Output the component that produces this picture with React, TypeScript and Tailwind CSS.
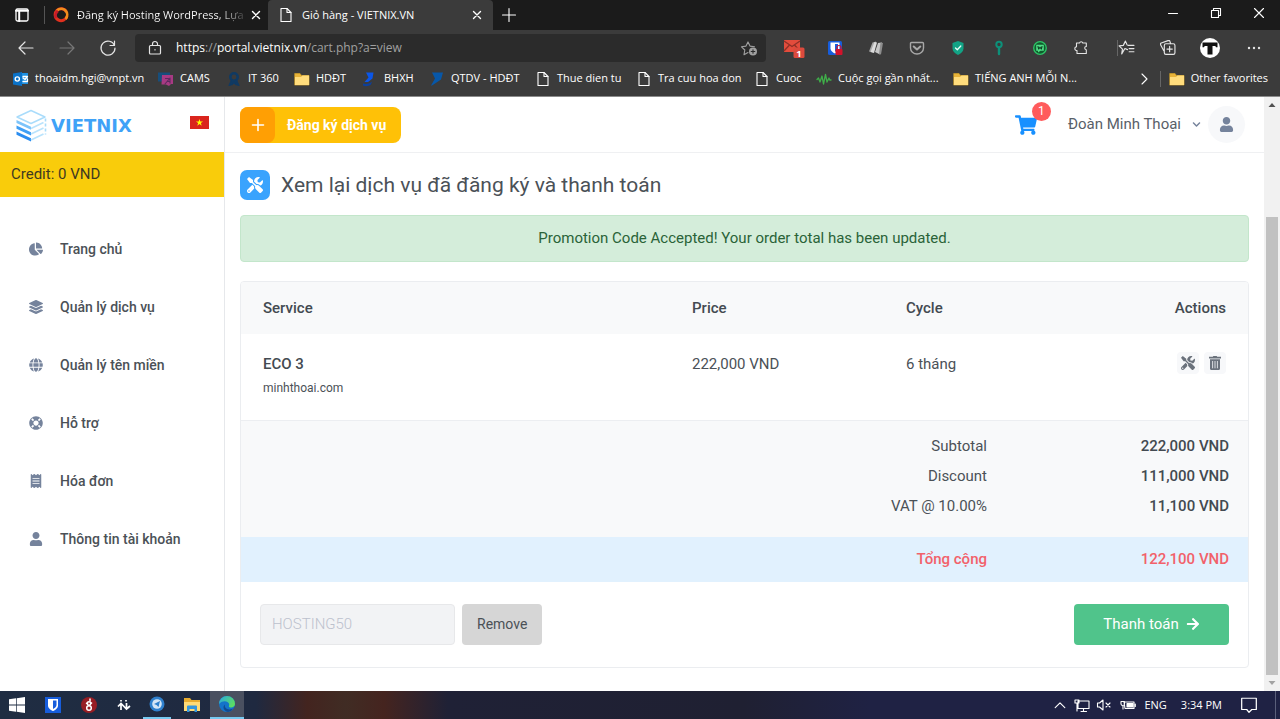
import type { ReactNode } from "react";
import {
  FaChartPie,
  FaLayerGroup,
  FaGlobe,
  FaLifeRing,
  FaReceipt,
  FaUser,
  FaTools,
  FaShoppingCart,
  FaTrashAlt,
  FaArrowRight,
  FaChevronDown,
} from "react-icons/fa";

type SvgProps = { children: ReactNode; className?: string; box?: string };

function Line({ children, className = "size-4", box = "0 0 16 16" }: SvgProps) {
  return (
    <svg
      viewBox={box}
      className={`shrink-0 ${className}`}
      fill="none"
      stroke="currentColor"
      strokeWidth="1.1"
      strokeLinecap="round"
      strokeLinejoin="round"
      aria-hidden="true"
    >
      {children}
    </svg>
  );
}

const PageIcon = () => (
  <Line>
    <path d="M3 1.5h6l4 4v9H3z" strokeWidth="1.1" />
    <path d="M9 1.5v4h4" strokeWidth="1.1" />
  </Line>
);

const FolderIcon = () => (
  <Line>
    <path d="M1 2.5h5l1.5 2H15V14H1z" fill="#e8b339" stroke="#c79a2b" strokeWidth="0.8" />
    <path d="M1 6h6l1.5-1.5H15V14H1z" fill="#ffdc7c" stroke="none" />
  </Line>
);

const OutlookIcon = () => (
  <Line>
    <path d="M6 2h9v11H6z" fill="#1e90e0" stroke="none" />
    <path d="M0 2.500 9 1v14l-9-1.500z" fill="#0a72c8" stroke="none" />
    <circle cx="4.300" cy="8" r="2.100" stroke="#fff" strokeWidth="1.400" />
    <path d="M10 5.500h4.500l-2.500 3-2-1.500M10 10.500h4.500V8" stroke="#fff" strokeWidth="1.300" />
  </Line>
);

const CamsIcon = () => (
  <Line>
    <path d="M0 1.500h12v9H0z" fill="#174e7c" stroke="none" />
    <path d="M4 4h11v9h-2l-2 2-3-1.500H3.500z" fill="#a83a83" stroke="none" />
    <path d="m7 13 5-6v5M7.500 7.500h3M9 10.500h3" stroke="#5b2a5e" strokeWidth="1.100" />
  </Line>
);

const ItIcon = () => (
  <Line>
    <circle cx="8" cy="6" r="3.700" stroke="#103a63" strokeWidth="2.600" />
    <path d="M5.500 9 3 14.500l3.500-1L8 11l1.500 2.500 3.500 1L10.500 9" fill="#103a63" stroke="#103a63" />
  </Line>
);

const BhxhIcon = () => (
  <Line>
    <path d="M4 1.500h7.500l-1 6-4.500 3.500H2.500l4-4.500z" fill="#0b56e8" stroke="none" />
    <path d="M1 12.500c4 1 7 0 9-2l-1 3c-2 2-6 2-8 1z" fill="#0d3f9a" stroke="none" />
  </Line>
);

const QtdvIcon = () => (
  <Line>
    <path d="M3 1.500h11l-2 7-9 6H2l4-7z" fill="#0757a8" stroke="none" />
  </Line>
);

const WaveIcon = () => (
  <Line>
    <path d="M1 8.500 2.500 7l1.500 4L6 5l1.500 8L9.500 3.500 11 11l2-4 .7 2H15" stroke="#3fae49" strokeWidth="1.300" />
  </Line>
);

const favorites: { label: string; icon: ReactNode; width: string }[] = [
  { label: "thoaidm.hgi@vnpt.vn", icon: <OutlookIcon />, width: "w-[145px]" },
  { label: "CAMS", icon: <CamsIcon />, width: "w-[68px]" },
  { label: "IT 360", icon: <ItIcon />, width: "w-[68px]" },
  { label: "HDĐT", icon: <FolderIcon />, width: "w-[68px]" },
  { label: "BHXH", icon: <BhxhIcon />, width: "w-[67px]" },
  { label: "QTDV - HDĐT", icon: <QtdvIcon />, width: "w-[106px]" },
  { label: "Thue dien tu", icon: <PageIcon />, width: "w-[101px]" },
  { label: "Tra cuu hoa don", icon: <PageIcon />, width: "w-[118px]" },
  { label: "Cuoc", icon: <PageIcon />, width: "w-[62px]" },
  { label: "Cuộc gọi gần nhất...", icon: <WaveIcon />, width: "w-[137px]" },
  { label: "TIẾNG ANH MỖI N...", icon: <FolderIcon />, width: "w-[140px]" },
];

function TabStrip() {
  return (
    <div className="flex h-[30px] bg-[#1b1b1b] text-xs text-white">
      <button aria-label="Tab actions" className="flex w-11 items-center justify-center">
        <Line>
          <rect x="2" y="2" width="12" height="12" rx="1.500" strokeWidth="1.300" />
          <path d="M2 3.700h12M5.200 5v9" strokeWidth="2" />
        </Line>
      </button>
      <div className="my-1.5 w-px bg-[#555]" />
      <div className="flex w-[223px] items-center gap-2 pr-1 pl-2">
        <svg viewBox="0 0 16 16" className="size-4 shrink-0" aria-hidden="true">
          <path d="M13.500 5A6 6 0 1 0 14 9" fill="none" stroke="#e0301e" strokeWidth="3" />
          <path d="M4 3.500a6 6 0 0 1 8.500 8.500" fill="none" stroke="#f28c1c" strokeWidth="2.500" />
          <path d="M3 11a6 6 0 0 1 2-7" fill="none" stroke="#c21c2c" strokeWidth="2.500" />
        </svg>
        <span className="bg-linear-to-r from-white from-85% to-[#444] bg-clip-text text-[11px] whitespace-nowrap text-transparent">
          Đăng ký Hosting WordPress, Lựa
        </span>
        <button aria-label="Close tab" className="-ml-2 flex flex-1 justify-end">
          <Line>
            <path d="m4.500 4.500 7 7m0-7-7 7" strokeWidth="1.400" />
          </Line>
        </button>
      </div>
      <div className="flex w-[225px] items-center gap-2 rounded-t bg-[#3b3b3b] pr-2 pl-2.5">
        <PageIcon />
        <span className="text-[11px] whitespace-nowrap">Giỏ hàng - VIETNIX.VN</span>
        <button aria-label="Close tab" className="ml-auto">
          <Line>
            <path d="m4.500 4.500 7 7m0-7-7 7" strokeWidth="1.400" />
          </Line>
        </button>
      </div>
      <button aria-label="New tab" className="flex w-8 items-center justify-center">
        <Line>
          <path d="M8 1.500v13M1.500 8h13" />
        </Line>
      </button>
      <div className="ml-auto flex">
        <button aria-label="Minimize" className="flex w-[43px] items-center justify-center pb-1">
          <Line>
            <path d="M3.500 8.500h9" />
          </Line>
        </button>
        <button aria-label="Restore" className="flex w-[43px] items-center justify-center pb-1">
          <Line>
            <path d="M3.500 5.500h7v7h-7zM5.500 5.500v-2h7v7h-2" />
          </Line>
        </button>
        <button aria-label="Close" className="flex w-[43px] items-center justify-center pb-1">
          <Line>
            <path d="m3.500 3.500 9 9m0-9-9 9" />
          </Line>
        </button>
      </div>
    </div>
  );
}

function ExtButton({ label, children }: { label: string; children: ReactNode }) {
  return (
    <button aria-label={label} className="flex w-[41px] items-center justify-center">
      {children}
    </button>
  );
}

function Toolbar() {
  return (
    <div className="flex h-[35px] items-center bg-[#3b3b3b] text-[#e4e4e4]">
      <div className="flex w-[135px] items-center pl-[17px]">
        <button aria-label="Back" className="w-[41px]">
          <Line className="size-[18px]" box="0 0 18 18">
            <path d="M16 9H2m6-6L2 9l6 6" strokeWidth="1.200" />
          </Line>
        </button>
        <button aria-label="Forward" className="w-[41px] text-[#777]">
          <Line className="size-[18px]" box="0 0 18 18">
            <path d="M2 9h14m-6-6 6 6-6 6" strokeWidth="1.200" />
          </Line>
        </button>
        <button aria-label="Refresh">
          <Line className="size-[18px]" box="0 0 18 18">
            <path d="M15.500 6.500A7 7 0 1 0 16 9M15.500 2v4.500H11" strokeWidth="1.200" />
          </Line>
        </button>
      </div>
      <div className="flex h-[28px] flex-1 items-center rounded bg-[#2b2b2b] pr-2 pl-3">
        <Line>
          <rect x="2.500" y="5.500" width="11" height="8.500" rx="1" strokeWidth="1.200" />
          <path d="M5.500 5.500V4a2.500 2.500 0 0 1 5 0v1.500M8 9.500v.5" strokeWidth="1.200" />
        </Line>
        <div
          role="textbox"
          aria-label="Address"
          contentEditable
          suppressContentEditableWarning
          className="ml-[13px] flex-1 text-xs whitespace-nowrap text-[#a0a0a0] outline-none"
        >
          <span className="text-white">https</span>://<span className="text-white">portal.vietnix.vn</span>
          /cart.php?a=view
        </div>
        <button aria-label="Add to favorites" className="text-[#a0a0a0]">
          <Line className="size-[18px]" box="0 0 18 18">
            <path d="M8 13.500 4 15.700l.8-4.700-3.300-3.200 4.500-.7 2-4.200 2 4.200 4.500.7" />
            <circle cx="13" cy="12.500" r="4" fill="currentColor" stroke="none" />
            <path d="M13 10.700v3.600m-1.800-1.800h3.600" stroke="#2b2b2b" />
          </Line>
        </button>
      </div>
      <div className="flex pl-[7px]">
        <ExtButton label="Mail">
          <svg viewBox="0 0 22 20" className="h-5 w-[22px]" aria-hidden="true">
            <path d="M1 2h16v12H1z" fill="#e34c3c" />
            <path d="m1 3 8 5.500L17 3M1 13l5.500-6M17 13l-5.500-6" stroke="#8f3027" strokeWidth="1.300" fill="none" />
            <rect x="10.500" y="9.500" width="11" height="10.500" rx="1.500" fill="#dc4a3d" />
            <text x="16" y="18.500" textAnchor="middle" fontSize="9.500" fontWeight="700" fill="#fff">
              1
            </text>
          </svg>
        </ExtButton>
        <ExtButton label="Password manager">
          <svg viewBox="0 0 16 16" className="size-4" aria-hidden="true">
            <rect x="1" y="1" width="14" height="14" rx="1.500" fill="#175ddc" />
            <path d="M3.500 2.500h9v6c0 2.500-2.500 4-4.500 5-2-1-4.500-2.500-4.500-5z" fill="#fff" />
            <path d="M8 4h3v5l-3 3z" fill="#175ddc" />
            <rect x="8.500" y="9" width="7" height="6" rx="1" fill="#d3122b" />
            <path d="M10 9V7.500a2 2 0 0 1 4 0V9" stroke="#d3122b" strokeWidth="1.200" fill="none" />
          </svg>
        </ExtButton>
        <ExtButton label="Reader">
          <svg viewBox="0 0 16 16" className="size-4" aria-hidden="true">
            <path d="M4.500 2.500 8 1.500 5.500 12.500l-4.500-1z" fill="#a5a5a5" />
            <path d="m6.500 2 2.500.5-3 10.500-3.500-1z" fill="#dcdcdc" />
            <path d="m10 3 4-.5-2 12-5-2.500z" fill="#c7c7c7" />
            <path d="M12.500 2.500 15 3l-2 11.500-2-.5z" fill="#8d8d8d" />
          </svg>
        </ExtButton>
        <ExtButton label="Pocket">
          <Line>
            <path d="M1.500 3.500q0-1 1-1h11q1 0 1 1V8a6.500 6 0 0 1-13 0z" stroke="#a8a8a8" strokeWidth="1.400" />
            <path d="m4.700 6.500 3.300 3 3.300-3" stroke="#a8a8a8" strokeWidth="2" />
          </Line>
        </ExtButton>
        <ExtButton label="Protection">
          <Line>
            <path d="m8 1 5.500 2v5.500c0 3-2.500 5-5.500 6.500-3-1.500-5.500-3.500-5.500-6.500V3z" fill="#12a385" stroke="none" />
            <path d="m5.500 8 1.800 1.800L10.800 6" stroke="#e8fff8" strokeWidth="1.300" />
          </Line>
        </ExtButton>
        <ExtButton label="Key">
          <Line>
            <circle cx="8" cy="4.500" r="2.700" stroke="#0d9079" strokeWidth="2" />
            <path d="M8 7.500v6.500" stroke="#0d9079" strokeWidth="2.400" />
          </Line>
        </ExtButton>
        <ExtButton label="Assistant">
          <Line>
            <circle cx="8" cy="8" r="6.300" fill="#0f5c2d" stroke="#2dc567" strokeWidth="1.300" />
            <path d="M4.200 4.700h7.600v6H8.500L6 12.500v-1.800H4.200z" fill="#4fdc85" stroke="none" />
            <path d="m6 6.500.7 2.500L8 7.200 9.300 9l.7-2.500" stroke="#0b3d1f" />
          </Line>
        </ExtButton>
        <ExtButton label="Extensions">
          <Line>
            <path d="M3.500 3h3a1.700 1.700 0 0 1 3.300 0h3.500v3.500a1.600 1.600 0 1 0 0 3.200V13.500H4v-3a1.900 1.900 0 1 1-.5-3.800z" />
          </Line>
        </ExtButton>
      </div>
      <div className="flex items-center pr-[18px] pl-4">
        <div className="h-4 w-px bg-[#666]" />
        <button aria-label="Favorites">
          <Line className="size-[17px]">
            <path d="m9 10-2.500-1L3.500 14l.7-4.500L1 6.500 5 6l2-4 1.500 3.500M9.500 6H15m-4.500 3H15m-4.500 3H15" />
          </Line>
        </button>
        <button aria-label="Collections" className="ml-6">
          <Line className="size-[17px]">
            <path d="M4.500 11 1.500 5.500V4l7-2.500H10l1 3M5 12V6q0-1.500 1.500-1.500h7Q15 4.500 15 6v7q0 1.500-1.500 1.500h-7Q5 14.500 5 13zM10 7v5M7.500 9.500h5" />
          </Line>
        </button>
        <button aria-label="Profile" className="ml-6">
          <svg viewBox="0 0 20 20" className="size-5" aria-hidden="true">
            <circle cx="10" cy="10" r="10" fill="#fff" />
            <path d="M2.500 4.500h15v4.700h-1.500L15.300 8h-2.800v8.500h-5V8H4.700L4 9.200H2.500z" fill="#111" />
          </svg>
        </button>
        <button aria-label="Settings" className="ml-[26px]">
          <svg viewBox="0 0 16 16" className="size-4" fill="#e4e4e4" aria-hidden="true">
            <circle cx="3" cy="8" r="1.200" />
            <circle cx="8" cy="8" r="1.200" />
            <circle cx="13" cy="8" r="1.200" />
          </svg>
        </button>
      </div>
    </div>
  );
}

function FavoritesBar() {
  return (
    <nav
      aria-label="Favorites"
      className="flex h-8 items-center border-b border-[#8b8b8b] bg-[#3b3b3b] pb-1 pl-[13px] text-[11px] text-white"
    >
      {favorites.map((f) => (
        <a key={f.label} href="#" className={`flex shrink-0 items-center gap-1.5 whitespace-nowrap ${f.width}`}>
          {f.icon}
          {f.label}
        </a>
      ))}
      <div className="ml-auto flex items-center pr-3">
        <button aria-label="More favorites">
          <Line>
            <path d="m6 3 5 5-5 5" />
          </Line>
        </button>
        <div className="mx-2 h-4 w-px bg-[#666]" />
        <a href="#" className="flex items-center gap-1.5 whitespace-nowrap">
          <FolderIcon />
          Other favorites
        </a>
      </div>
    </nav>
  );
}

const menu = [
  { label: "Trang chủ", Icon: FaChartPie },
  { label: "Quản lý dịch vụ", Icon: FaLayerGroup },
  { label: "Quản lý tên miền", Icon: FaGlobe },
  { label: "Hỗ trợ", Icon: FaLifeRing },
  { label: "Hóa đơn", Icon: FaReceipt },
  { label: "Thông tin tài khoản", Icon: FaUser },
];

function Logo() {
  return (
    <a href="#" aria-label="Vietnix" className="flex items-center gap-1">
      <svg viewBox="0 0 32 34" className="h-[34px] w-8" fill="none" aria-hidden="true">
        <path d="M16 1.500 30 8 16 14.500 2 8z" stroke="#a9dcfb" strokeWidth="1.400" strokeLinejoin="round" />
        <path d="M1.500 11 16 17.800v3L1.500 14z" fill="#7cc4fa" />
        <path d="M1.500 16.500 16 23.300v3.200L1.500 19.700z" fill="#3f9ff5" />
        <path d="M1.500 22.500 16 29.300v3.200L1.500 25.700z" fill="#2b8df0" />
        <path d="m16 19.500 12.500-6M16 25 28.500 19M16 31l12.500-6" stroke="#b9e3fc" strokeWidth="1.700" />
        <path d="M30.500 9.500v16" stroke="#a9dcfb" strokeWidth="1.600" strokeDasharray="3 2" />
      </svg>
      <span className="font-['DejaVu_Sans',sans-serif] text-lg font-bold text-[#3fa2f7]">VIETNIX</span>
    </a>
  );
}

function Sidebar() {
  return (
    <aside className="w-[225px] shrink-0 border-r border-[#e6e8eb]">
      <div className="flex h-[55px] items-center justify-between px-[15px] pt-0.5">
        <Logo />
        <svg viewBox="0 0 19 13" className="mb-1.5 h-[13px] w-[19px]" role="img" aria-label="Tiếng Việt">
          <path d="M0 0h19v13H0z" fill="#da251d" />
          <path
            d="m9.500 3 .85 2.500h2.700l-2.200 1.600.85 2.600-2.200-1.600-2.200 1.600.85-2.600L5.950 5.500h2.700z"
            fill="#ff0"
          />
        </svg>
      </div>
      <div className="flex h-[45px] items-center bg-[#f9cc0b] px-[11px] text-[15px] text-[#3f3a21]">Credit: 0 VND</div>
      <nav className="pt-[23px]">
        {menu.map(({ label, Icon }) => (
          <a
            key={label}
            href="#"
            className="flex h-[58px] items-center gap-4 pl-7 text-sm font-medium text-[#4b5157]"
          >
            <Icon className="size-4 shrink-0 p-px text-[#75839c]" />
            {label}
          </a>
        ))}
      </nav>
    </aside>
  );
}

function Header() {
  return (
    <header className="flex h-14 items-center justify-between border-b border-[#eff0f2] px-[15px]">
      <button className="flex h-9 items-center overflow-hidden rounded-lg bg-[#ffc107] text-sm font-bold text-white">
        <span className="flex h-full w-[35px] items-center justify-center rounded-r-lg bg-[#ff9f04]">
          <Line>
            <path d="M8 2.500v11M2.500 8h11" strokeWidth="1.600" />
          </Line>
        </span>
        <span className="pr-[15px] pl-3">Đăng ký dịch vụ</span>
      </button>
      <div className="flex items-center pr-1">
        <a href="#" aria-label="Giỏ hàng" className="relative mr-[31px]">
          <FaShoppingCart className="size-[22px] text-[#1890ff]" />
          <span className="absolute -top-[12px] left-[17px] flex size-[19px] items-center justify-center rounded-full bg-[#ff5b5c] text-xs text-white">
            1
          </span>
        </a>
        <button className="flex items-center text-[15px] text-[#596068]">
          Đoàn Minh Thoại
          <FaChevronDown className="ml-[11px] size-[9px] text-[#75839c]" />
          <span className="ml-[7px] flex size-[37px] items-center justify-center rounded-full bg-[#f7f8fa]">
            <FaUser className="size-[15px] text-[#75839c]" />
          </span>
        </button>
      </div>
    </header>
  );
}

const totals = [
  { label: "Subtotal", value: "222,000 VND" },
  { label: "Discount", value: "111,000 VND" },
  { label: "VAT @ 10.00%", value: "11,100 VND" },
];

function Cart() {
  return (
    <section className="overflow-hidden rounded border border-[#ebedf0] text-[15px]">
      <table className="w-full table-fixed text-left leading-6 text-[#4b5157]">
        <colgroup>
          <col />
          <col className="w-[214px]" />
          <col className="w-[214px]" />
          <col className="w-[150px]" />
        </colgroup>
        <thead className="bg-[#f8f9fa] text-[#434a51]">
          <tr className="h-[52px]">
            <th className="px-[22px] font-medium">Service</th>
            <th className="px-[22px] font-medium">Price</th>
            <th className="px-[22px] font-medium">Cycle</th>
            <th className="px-[22px] text-right font-medium">Actions</th>
          </tr>
        </thead>
        <tbody>
          <tr className="h-[86px] border-b border-[#eceef1] align-top">
            <td className="px-[22px] pt-[18px]">
              <div className="font-medium text-[#434a51]">ECO 3</div>
              <div className="text-xs leading-6">minhthoai.com</div>
            </td>
            <td className="px-[22px] pt-[18px]">222,000 VND</td>
            <td className="px-[22px] pt-[18px]">6 tháng</td>
            <td className="px-[22px] pt-[18px]">
              <div className="flex justify-end gap-[5px] text-[#6b727c]">
                <button aria-label="Edit" className="flex size-[22px] items-center justify-center rounded bg-[#f7f8fa]">
                  <FaTools className="size-3.5" />
                </button>
                <button
                  aria-label="Remove service"
                  className="flex size-[22px] items-center justify-center rounded bg-[#f7f8fa]"
                >
                  <svg viewBox="0 0 14 14" className="size-3.5" fill="currentColor" aria-hidden="true">
                    <path d="M1 .8h3.800L5.300 0h3.400l.5.800H13v1.800H1z" />
                    <path d="M2 3.300h10v9.200q0 1.500-1.500 1.500h-7Q2 14 2 12.500z" />
                    <path d="M4.600 5v7.300M7 5v7.300M9.400 5v7.300" stroke="#f7f8fa" strokeWidth="0.800" />
                  </svg>
                </button>
              </div>
            </td>
          </tr>
        </tbody>
      </table>
      <dl className="bg-[#f8f9fa] pt-[11px] pb-[15px] text-right text-[#4b5157]">
        {totals.map((t) => (
          <div key={t.label} className="flex h-[30px] items-center justify-end pr-[19px]">
            <dt>{t.label}</dt>
            <dd className="w-[242px] font-medium text-[#434a51]">{t.value}</dd>
          </div>
        ))}
      </dl>
      <dl className="flex h-[45px] items-center justify-end bg-[#e1f1fe] pr-[19px] text-right font-medium text-[#f2616a]">
        <dt>Tổng cộng</dt>
        <dd className="w-[242px]">122,100 VND</dd>
      </dl>
      <form className="flex items-center px-[19px] py-[22px]" onSubmit={(e) => e.preventDefault()}>
        <input
          aria-label="Promotion code"
          disabled
          value="HOSTING50"
          className="h-[41px] w-[195px] rounded border border-[#e7e8ea] bg-[#f2f3f5] px-[11px] font-light text-[#bcc1cd]"
        />
        <button type="button" className="ml-[7px] h-[41px] rounded bg-[#d6d6d6] px-[15px] text-sm text-[#4b5157]">
          Remove
        </button>
        <button
          type="submit"
          className="ml-auto flex h-[41px] w-[155px] items-center justify-center gap-[7px] rounded bg-[#50c48b] text-white"
        >
          Thanh toán
          <FaArrowRight className="size-3.5" />
        </button>
      </form>
    </section>
  );
}

function Taskbar() {
  return (
    <footer className="flex h-[28px] items-stretch bg-[linear-gradient(90deg,#1f2d42_0%,#1f2940_20%,#43241f_24%,#402c24_27%,#45241f_30%,#1f2136_35%,#1f2032_58%,#1f2244_68%)] text-[11px] text-white">
      <button aria-label="Start" className="flex w-[34px] items-center justify-center">
        <svg viewBox="0 0 16 16" className="size-4" fill="#fff" aria-hidden="true">
          <path d="M0 2.300 7 1.300v6.300H0zM7.700 1.200 16 0v7.600H7.700zM0 8.400h7v6.300l-7-1zM7.700 8.400H16V16l-8.300-1.200z" />
        </svg>
      </button>
      <button aria-label="Bitwarden" className="flex w-[38px] items-center justify-center">
        <svg viewBox="0 0 16 16" className="size-4" aria-hidden="true">
          <path d="M0 0h16v16H0z" fill="#175ddc" />
          <path d="M3 2h10v6.500c0 3-3 4.700-5 5.500-2-.8-5-2.500-5-5.500z" fill="#fff" />
          <path d="M8 3.500h3.500V8c0 2-2 3.300-3.500 4z" fill="#175ddc" />
        </svg>
      </button>
      <button aria-label="Player" className="flex w-[33px] items-center justify-center">
        <svg viewBox="0 0 16 16" className="size-4" fill="none" stroke="#fff" aria-hidden="true">
          <circle cx="8" cy="8" r="8" fill="#971d24" stroke="none" />
          <circle cx="8" cy="11" r="2.300" strokeWidth="1.500" />
          <circle cx="8" cy="6.500" r="1.700" strokeWidth="1.500" />
          <path d="M9 4.500V1.500M5 6l2 1M11 5.500 9.500 7" strokeWidth="1.500" />
        </svg>
      </button>
      <button aria-label="Transfer" className="flex w-[37px] items-center justify-center">
        <svg viewBox="0 0 16 16" className="size-4" fill="none" stroke="#fff" strokeWidth="1.700" aria-hidden="true">
          <path d="M5 13V7M2 9.500l3-3 5 5 3-1M10.500 6v6M8 9.500l2.500 2.500 3.500-3M5 3v1.500M10 3v1.500" />
        </svg>
      </button>
      <button aria-label="Messenger" className="mr-[3px] ml-px flex w-7 items-center justify-center border-b-2 border-[#76c9f0]">
        <svg viewBox="0 0 16 16" className="size-4" aria-hidden="true">
          <circle cx="8" cy="8" r="7.500" fill="#2f80cd" />
          <circle cx="8" cy="8" r="4.800" fill="#d5e6f6" />
          <path d="m5 8 6-3-1.500 6L7.500 9z" fill="#2f80cd" />
        </svg>
      </button>
      <button aria-label="File Explorer" className="flex w-[36px] items-center justify-center">
        <svg viewBox="0 0 16 16" className="size-4" aria-hidden="true">
          <path d="M0 1h6l1.500 2H16v4H0z" fill="#e9ad30" />
          <path d="M0 5h16v9H0z" fill="#ffdb76" />
          <path d="M3 15V9.500q0-1 1-1h8q1 0 1 1V15h-2.500v-3h-5v3z" fill="#3597dc" />
        </svg>
      </button>
      <button
        aria-label="Microsoft Edge"
        className="flex w-[34px] items-center justify-center border-b-2 border-[#76c9f0] bg-[#4a5060]"
      >
        <svg viewBox="0 0 16 16" className="size-4" aria-hidden="true">
          <defs>
            <linearGradient id="edgeTop" x1="0" x2="1" y1="0" y2="0.500">
              <stop offset="0" stopColor="#27a7e5" />
              <stop offset="1" stopColor="#5bdc63" />
            </linearGradient>
          </defs>
          <circle cx="8" cy="8" r="8" fill="#1473c9" />
          <path d="M0 8a8 8 0 0 1 16 0c0 3-3 4-5.500 3.200-1.200-.6-.3-1.500-.3-2.700C10.200 5.500 4 3.500 0 8z" fill="url(#edgeTop)" />
          <path d="M6 8.500c-1 3 2 6 7 4.500l1.300-.6A8 8 0 0 1 9 16C4 15 3.500 10 6 8.500z" fill="#114a91" />
        </svg>
      </button>
      <div className="ml-auto flex items-center pr-1">
        <button aria-label="Show hidden icons" className="w-[21px]">
          <Line className="size-3.5">
            <path d="m2.500 11 5.500-5.500 5.500 5.500" strokeWidth="1.300" />
          </Line>
        </button>
        <Line>
          <path d="M4 4h11v7.500H4zM9.500 11.500V14M7 14.500h5.500M1 3h4v3H1zM3 6v8" />
        </Line>
        <Line className="ml-1.5 size-4">
          <path d="M1.500 6v4h2L7 13V3L3.500 6zM10 6l4 4m0-4-4 4" />
        </Line>
        <Line className="ml-2 size-4">
          <path d="M4 5h10v6.500H5zM15.300 7v2.500M1 4.500h3.500V7q0 1.500-1.700 1.500T1 7zM3 8.500V12" />
          <path d="M7 6.500h6V10H7z" fill="currentColor" />
        </Line>
        <span className="ml-2">ENG</span>
        <span className="ml-3.5 whitespace-nowrap">3:34 PM</span>
        <button aria-label="Notifications" className="ml-[18px]">
          <Line className="size-[18px]">
            <path d="M1.500 2h13v10h-4L8 14.500 6 12H1.500z" />
          </Line>
        </button>
        <div className="ml-[17px] h-7 w-px bg-[#5a5f7a]" />
      </div>
    </footer>
  );
}

export default function App() {
  return (
    <div className="flex min-h-screen flex-col bg-white font-['Open_Sans','Noto_Sans',sans-serif]">
      <TabStrip />
      <Toolbar />
      <FavoritesBar />
      <div className="flex flex-1 font-[Roboto,sans-serif]">
        <Sidebar />
        <div className="flex min-w-0 flex-1 flex-col">
          <Header />
          <main className="px-[15px] pt-[17px] pb-[22px]">
            <h1 className="flex items-center gap-[11px] text-[21px] leading-[30px] text-[#4b5157]">
              <span className="flex size-[30px] items-center justify-center rounded-[7px] bg-[#39a3fd]">
                <FaTools className="size-4 text-white" />
              </span>
              Xem lại dịch vụ đã đăng ký và thanh toán
            </h1>
            <div
              role="status"
              className="mt-[15px] mb-[19px] flex h-[47px] items-center justify-center rounded border border-[#c3e6cb] bg-[#d4edda] text-[15px] text-[#2a6338]"
            >
              Promotion Code Accepted! Your order total has been updated.
            </div>
            <Cart />
          </main>
        </div>
        <div className="flex w-4 shrink-0 flex-col items-center bg-[#f1f1f1]" aria-hidden="true">
          <svg viewBox="0 0 16 16" className="size-4" fill="#505050">
            <path d="m4.500 10 3.500-4 3.500 4z" />
          </svg>
          <div className="mt-[104px] w-3 flex-1 bg-[#c1c1c1]" />
          <svg viewBox="0 0 16 16" className="size-4" fill="#a3a3a3">
            <path d="m4.500 6 3.500 4 3.500-4z" />
          </svg>
        </div>
      </div>
      <Taskbar />
    </div>
  );
}
